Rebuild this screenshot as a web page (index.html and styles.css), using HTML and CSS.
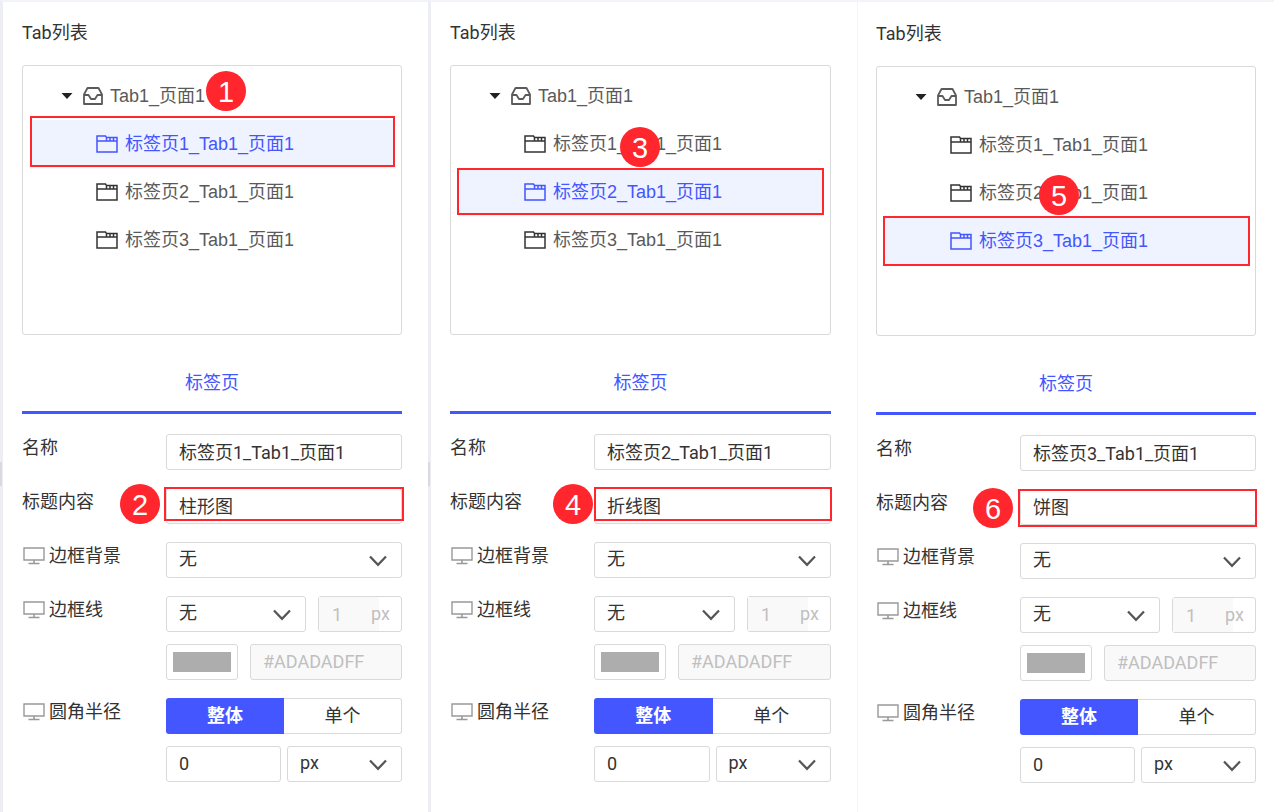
FILE: index.html
```html
<!DOCTYPE html>
<html lang="zh-CN">
<head>
  <meta charset="UTF-8" />
  <meta name="viewport" content="width=device-width, initial-scale=1.0"/>
  <title>Tab列表</title>
  <link rel="stylesheet" href="styles.css">
</head>
<body>

  <svg class="sprite" aria-hidden="true">
    <symbol id="i-caret" viewBox="0 0 12 8">
      <path d="M0.5 1h11L6 7z" fill="currentColor"/>
    </symbol>
    <symbol id="i-inbox" viewBox="0 0 22 20">
      <path d="M2 8.500L5.500 2h11L20 8.500V18H2zM2 9h4.500l2.500 4h4l2.500-4H20" fill="none" stroke="currentColor" stroke-width="1.800" stroke-linejoin="round"/>
    </symbol>
    <symbol id="i-folder" viewBox="0 0 22 18">
      <path d="M1 1v16h20V2.500H10.500L9.500 1zM1 6h20M10.500 2.500V6M14 3v3M17.500 3v3" fill="none" stroke="currentColor" stroke-width="1.500"/>
    </symbol>
    <symbol id="i-monitor" viewBox="0 0 22 18">
      <path d="M1 1h20v12H1z" fill="none" stroke="currentColor" stroke-width="1.400"/>
      <path d="M11 13v3.500M5.500 16.500h11" fill="none" stroke="currentColor" stroke-width="1.600"/>
    </symbol>
    <symbol id="i-chevron" viewBox="0 0 18 12">
      <path d="M1 1.500l8 8.300 8-8.300" fill="none" stroke="currentColor" stroke-width="2.200"/>
    </symbol>
  </svg>

  <main class="panels">

    <section class="panel">
      <h2 class="title">Tab列表</h2>
      <ul class="tree">
        <li class="node root">
          <svg class="caret"><use href="#i-caret"/></svg>
          <svg class="icon-inbox"><use href="#i-inbox"/></svg>
          <span>Tab1_页面1</span>
          <span class="badge badge-1">1</span>
        </li>
        <li class="node selected">
          <svg class="icon-folder"><use href="#i-folder"/></svg>
          <span>标签页1_Tab1_页面1</span>
          <span class="frame frame-1"></span>
        </li>
        <li class="node">
          <svg class="icon-folder"><use href="#i-folder"/></svg>
          <span>标签页2_Tab1_页面1</span>
        </li>
        <li class="node">
          <svg class="icon-folder"><use href="#i-folder"/></svg>
          <span>标签页3_Tab1_页面1</span>
        </li>
      </ul>
      <h3 class="tab">标签页</h3>

      <form class="form">
        <label for="name1">名称</label>
        <div class="field"><input class="box" type="text" id="name1" value="标签页1_Tab1_页面1"></div>

        <label for="text1">标题内容</label>
        <div class="field">
          <input class="box" type="text" id="text1" value="柱形图">
          <span class="frame frame-2"></span>
          <span class="badge badge-2">2</span>
        </div>

        <label for="bg1"><svg class="icon-monitor"><use href="#i-monitor"/></svg>边框背景</label>
        <div class="field">
          <div class="select"><select class="box" id="bg1"><option>无</option></select><svg><use href="#i-chevron"/></svg></div>
        </div>

        <label for="line1"><svg class="icon-monitor"><use href="#i-monitor"/></svg>边框线</label>
        <div class="rows">
          <div class="field line">
            <div class="select"><select class="box" id="line1"><option>无</option></select><svg><use href="#i-chevron"/></svg></div>
            <div class="box size"><input type="text" value="1" aria-label="边框线宽度" disabled><span>px</span></div>
          </div>
          <div class="field line color">
            <input class="box swatch" type="color" value="#adadad" aria-label="颜色">
            <input class="box" type="text" value="#ADADADFF" aria-label="颜色值" disabled>
          </div>
        </div>

        <label for="radius1"><svg class="icon-monitor"><use href="#i-monitor"/></svg>圆角半径</label>
        <div class="rows">
          <div class="field segment">
            <button type="button" class="active">整体</button>
            <button type="button">单个</button>
          </div>
          <div class="field radius">
            <input class="box" type="text" id="radius1" value="0">
            <div class="select"><select class="box" aria-label="单位"><option>px</option></select><svg><use href="#i-chevron"/></svg></div>
          </div>
        </div>
      </form>
    </section>

    <section class="panel">
      <h2 class="title">Tab列表</h2>
      <ul class="tree">
        <li class="node root">
          <svg class="caret"><use href="#i-caret"/></svg>
          <svg class="icon-inbox"><use href="#i-inbox"/></svg>
          <span>Tab1_页面1</span>
        </li>
        <li class="node">
          <svg class="icon-folder"><use href="#i-folder"/></svg>
          <span>标签页1_Tab1_页面1</span>
          <span class="badge badge-3">3</span>
        </li>
        <li class="node selected">
          <svg class="icon-folder"><use href="#i-folder"/></svg>
          <span>标签页2_Tab1_页面1</span>
          <span class="frame frame-3"></span>
        </li>
        <li class="node">
          <svg class="icon-folder"><use href="#i-folder"/></svg>
          <span>标签页3_Tab1_页面1</span>
        </li>
      </ul>
      <h3 class="tab">标签页</h3>

      <form class="form">
        <label for="name2">名称</label>
        <div class="field"><input class="box" type="text" id="name2" value="标签页2_Tab1_页面1"></div>

        <label for="text2">标题内容</label>
        <div class="field">
          <input class="box" type="text" id="text2" value="折线图">
          <span class="frame frame-4"></span>
          <span class="badge badge-4">4</span>
        </div>

        <label for="bg2"><svg class="icon-monitor"><use href="#i-monitor"/></svg>边框背景</label>
        <div class="field">
          <div class="select"><select class="box" id="bg2"><option>无</option></select><svg><use href="#i-chevron"/></svg></div>
        </div>

        <label for="line2"><svg class="icon-monitor"><use href="#i-monitor"/></svg>边框线</label>
        <div class="rows">
          <div class="field line">
            <div class="select"><select class="box" id="line2"><option>无</option></select><svg><use href="#i-chevron"/></svg></div>
            <div class="box size"><input type="text" value="1" aria-label="边框线宽度" disabled><span>px</span></div>
          </div>
          <div class="field line color">
            <input class="box swatch" type="color" value="#adadad" aria-label="颜色">
            <input class="box" type="text" value="#ADADADFF" aria-label="颜色值" disabled>
          </div>
        </div>

        <label for="radius2"><svg class="icon-monitor"><use href="#i-monitor"/></svg>圆角半径</label>
        <div class="rows">
          <div class="field segment">
            <button type="button" class="active">整体</button>
            <button type="button">单个</button>
          </div>
          <div class="field radius">
            <input class="box" type="text" id="radius2" value="0">
            <div class="select"><select class="box" aria-label="单位"><option>px</option></select><svg><use href="#i-chevron"/></svg></div>
          </div>
        </div>
      </form>
    </section>

    <section class="panel last">
      <h2 class="title">Tab列表</h2>
      <ul class="tree">
        <li class="node root">
          <svg class="caret"><use href="#i-caret"/></svg>
          <svg class="icon-inbox"><use href="#i-inbox"/></svg>
          <span>Tab1_页面1</span>
        </li>
        <li class="node">
          <svg class="icon-folder"><use href="#i-folder"/></svg>
          <span>标签页1_Tab1_页面1</span>
        </li>
        <li class="node">
          <svg class="icon-folder"><use href="#i-folder"/></svg>
          <span>标签页2_Tab1_页面1</span>
          <span class="badge badge-5">5</span>
        </li>
        <li class="node selected">
          <svg class="icon-folder"><use href="#i-folder"/></svg>
          <span>标签页3_Tab1_页面1</span>
          <span class="frame frame-5"></span>
        </li>
      </ul>
      <h3 class="tab">标签页</h3>

      <form class="form">
        <label for="name3">名称</label>
        <div class="field"><input class="box" type="text" id="name3" value="标签页3_Tab1_页面1"></div>

        <label for="text3">标题内容</label>
        <div class="field">
          <input class="box" type="text" id="text3" value="饼图">
          <span class="frame frame-6"></span>
          <span class="badge badge-6">6</span>
        </div>

        <label for="bg3"><svg class="icon-monitor"><use href="#i-monitor"/></svg>边框背景</label>
        <div class="field">
          <div class="select"><select class="box" id="bg3"><option>无</option></select><svg><use href="#i-chevron"/></svg></div>
        </div>

        <label for="line3"><svg class="icon-monitor"><use href="#i-monitor"/></svg>边框线</label>
        <div class="rows">
          <div class="field line">
            <div class="select"><select class="box" id="line3"><option>无</option></select><svg><use href="#i-chevron"/></svg></div>
            <div class="box size"><input type="text" value="1" aria-label="边框线宽度" disabled><span>px</span></div>
          </div>
          <div class="field line color">
            <input class="box swatch" type="color" value="#adadad" aria-label="颜色">
            <input class="box" type="text" value="#ADADADFF" aria-label="颜色值" disabled>
          </div>
        </div>

        <label for="radius3"><svg class="icon-monitor"><use href="#i-monitor"/></svg>圆角半径</label>
        <div class="rows">
          <div class="field segment">
            <button type="button" class="active">整体</button>
            <button type="button">单个</button>
          </div>
          <div class="field radius">
            <input class="box" type="text" id="radius3" value="0">
            <div class="select"><select class="box" aria-label="单位"><option>px</option></select><svg><use href="#i-chevron"/></svg></div>
          </div>
        </div>
      </form>
    </section>

  </main>
</body>
</html>
```
FILE: styles.css
```css
* {
  box-sizing: border-box;
}

body {
  margin: 0;
  background-color: #ffffff;
  color: #333333;
  font-family: Roboto, "Noto Sans CJK SC", sans-serif;
  font-size: 18px;
  line-height: 24px;
}

input, select, button {
  font: inherit;
  color: inherit;
  margin: 0;
}

.sprite {
  display: none;
}

.panels {
  display: grid;
  grid-template-columns: 428fr 429fr 417fr;
  min-height: 100vh;
}

.panel {
  position: relative;
  min-width: 0;
  padding: 19px 26px 28px 19px;
  border-top: 2px solid #f3f4f9;
  border-left: 3px solid #eceef4;
}

/* resize handle on the panel edge */
.panel::before {
  content: "";
  position: absolute;
  left: -3px;
  top: 460px;
  width: 2px;
  height: 24px;
  background-color: #d9dade;
}

.panel.last {
  padding: 20px 18px 28px;
  border-left: 1px solid #f3f4f9;
}

.panel.last::before {
  display: none;
}

.title {
  margin: 0 0 20px;
  font-size: 18px;
  font-weight: 400;
}

/* tree */
.tree {
  height: 270px;
  margin: 0;
  padding: 6px 7px;
  list-style: none;
  border: 1px solid #d9d9d9;
  border-radius: 3px;
  font-family: "Liberation Sans", "Noto Sans CJK SC", sans-serif;
}

.node {
  position: relative;
  display: flex;
  align-items: center;
  height: 48px;
  padding-left: 66px;
  color: #5a5a5a;
}

.node.root {
  padding-left: 31px;
}

.node.selected {
  background-color: #eff3ff;
  color: #4356ff;
}

.caret {
  width: 12px;
  height: 8px;
  margin-right: 9px;
  color: #222222;
}

.icon-inbox {
  width: 22px;
  height: 20px;
  margin-right: 6px;
}

.icon-folder {
  width: 22px;
  height: 18px;
  margin-right: 7px;
  color: #333333;
}

.selected .icon-folder {
  color: #4356ff;
}

.tab {
  margin: 21px 0 20px;
  padding: 15px 0 16px;
  border-bottom: 3px solid #4356ff;
  color: #4356ff;
  font-size: 18px;
  font-weight: 400;
  text-align: center;
}

/* form */
.form {
  display: grid;
  grid-template-columns: 144px 1fr;
  row-gap: 18px;
}

label {
  display: flex;
  align-items: center;
  height: 28px;
}

.icon-monitor {
  width: 22px;
  height: 18px;
  margin: 0 4px 0 1px;
  color: #999999;
}

.field {
  position: relative;
  min-width: 0;
}

.rows {
  display: grid;
  row-gap: 12px;
}

.box {
  display: block;
  width: 100%;
  height: 36px;
  padding: 0 12px 2px;
  border: 1px solid #d9d9d9;
  border-radius: 3px;
  background-color: #ffffff;
}

.box:disabled {
  background-color: #f9f9f9;
  color: #bfbfbf;
}

.select {
  position: relative;
}

.select select {
  appearance: none;
}

.select svg {
  position: absolute;
  right: 15px;
  top: 13px;
  width: 18px;
  height: 12px;
  color: #555555;
  pointer-events: none;
}

.line {
  display: grid;
  grid-template-columns: 1fr 84px;
  column-gap: 12px;
}

.line.color {
  grid-template-columns: 72px 1fr;
}

.size {
  display: flex;
  align-items: center;
  padding: 0;
  color: #bfbfbf;
}

.size input {
  width: 60px;
  height: 34px;
  padding: 0 13px;
  border: none;
  background-color: #f9f9f9;
}

.size span {
  margin-left: -8px;
}

.swatch {
  padding: 7px 6px;
}

.swatch::-webkit-color-swatch-wrapper {
  padding: 0;
}

.swatch::-webkit-color-swatch {
  border: none;
  border-radius: 0;
}

.segment {
  display: grid;
  grid-template-columns: 1fr 1fr;
}

.segment button {
  height: 36px;
  padding: 0;
  border: 1px solid #d9d9d9;
  border-left: none;
  border-radius: 0 3px 3px 0;
  background-color: #ffffff;
}

.segment .active {
  border: none;
  border-radius: 3px 0 0 3px;
  background-color: #4356ff;
  color: #ffffff;
  font-weight: 700;
}

.radius {
  display: grid;
  grid-template-columns: 1fr 1fr;
  column-gap: 6px;
}

/* numbered callouts lying over the panels */
.frame {
  position: absolute;
  border: 2px solid #ff262e;
  pointer-events: none;
}

.badge {
  position: absolute;
  width: 40px;
  height: 40px;
  border-radius: 50%;
  background-color: #ff262e;
  color: #ffffff;
  font-family: "Liberation Sans", Arial, sans-serif;
  font-size: 29px;
  line-height: 42px;
  text-align: center;
  z-index: 1;
}

.frame-1 { inset: -4px -1px 1px 0; }
.frame-2 { inset: -1px -2px 3px -2px; }
.frame-3 { inset: 0 -1px 1px; }
.frame-4 { inset: -1px -1px 3px 0; }
.frame-5 { inset: -1px -2px -1px -1px; }
.frame-6 { inset: 0 -1px -2px -2px; }

.badge-1 { left: 176px; top: -1px; }
.badge-2 { left: -46px; top: -4px; }
.badge-3 { left: 162px; top: 7px; }
.badge-4 { left: -41px; top: -4px; }
.badge-5 { left: 155px; top: 6px; }
.badge-6 { left: -47px; top: -1px; }
```
